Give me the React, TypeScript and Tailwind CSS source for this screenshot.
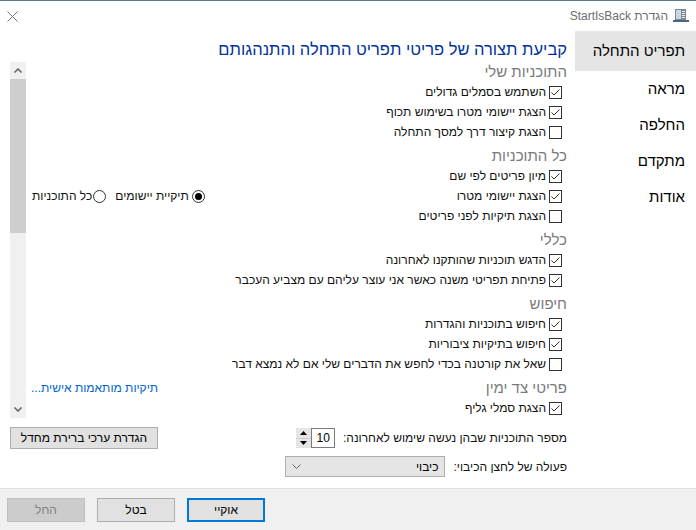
import type { ReactNode } from 'react';

const font = { fontFamily: '"Liberation Sans", Arial, "DejaVu Sans", sans-serif' };

function Check({ on }: { on: boolean }) {
  return (
    <svg width="13" height="13" viewBox="0 0 13 13" className="shrink-0">
      <rect x="0.5" y="0.5" width="12" height="12" fill="white" stroke="#333" />
      {on && <path d="M2.5 6.5 L5 9 L10.5 3.5" fill="none" stroke="#333" strokeWidth="1" />}
    </svg>
  );
}

function Radio({ on }: { on: boolean }) {
  return (
    <svg width="13" height="13" viewBox="0 0 13 13" className="shrink-0">
      <circle cx="6.5" cy="6.5" r="6" fill="white" stroke="#333" />
      {on && <circle cx="6.5" cy="6.5" r="3.5" fill="#000" />}
    </svg>
  );
}

function Item({ on, label, children }: { on: boolean; label: string; children?: ReactNode }) {
  return (
    <div className="flex h-[20px] items-center pr-[5px]">
      <Check on={on} />
      <span className="mr-[3px] whitespace-nowrap text-[12px] text-[#111]">{label}</span>
      {children}
    </div>
  );
}

function Section({ title, first, children }: { title: string; first?: boolean; children?: ReactNode }) {
  return (
    <div className={`flex h-[20px] items-center justify-between ${first ? '' : 'mt-[4px]'}`}>
      <span className="whitespace-nowrap text-[15px] text-[#7a7a7a]">{title}</span>
      {children}
    </div>
  );
}

const NAV = ['תפריט התחלה', 'מראה', 'החלפה', 'מתקדם', 'אודות'];

export default function App() {
  return (
    <div
      dir="rtl"
      style={font}
      className="flex h-[530px] w-[696px] flex-col overflow-hidden border-t border-[#5b7a91] bg-white"
    >
      {/* Title bar */}
      <div className="flex h-[30px] shrink-0 items-center pl-[7px] pr-[7px]">
        <svg width="16" height="14" viewBox="0 0 16 14" className="shrink-0">
          <rect x="2" y="0" width="11" height="11" fill="#7a8896" />
          <rect x="3" y="1" width="5" height="9" fill="#cfd6dc" />
          <rect x="9" y="2" width="3" height="1" fill="#e8ecef" />
          <rect x="9" y="4" width="3" height="1" fill="#e8ecef" />
          <rect x="9" y="6" width="3" height="1" fill="#e8ecef" />
          <rect x="9" y="8" width="3" height="1" fill="#e8ecef" />
          <rect x="0" y="11" width="16" height="2" fill="#4f6478" />
        </svg>
        <span className="mr-[5px] whitespace-nowrap text-[12px] text-[#6d6d6d]">הגדרת StartIsBack</span>
        <div className="flex-1" />
        <svg width="11" height="11" viewBox="0 0 11 11" className="shrink-0">
          <path d="M0.5 0.5 L10.5 10.5 M10.5 0.5 L0.5 10.5" stroke="#777" strokeWidth="1" />
        </svg>
      </div>

      {/* Body */}
      <div className="flex min-h-0 flex-1">
        {/* Navigation */}
        <div className="flex w-[121px] shrink-0 flex-col">
          {NAV.map((n, i) => (
            <div
              key={n}
              className={`flex items-center whitespace-nowrap pr-[11px] text-[15px] text-black ${
                i === 0 ? 'h-[40px] bg-[#e5e5e5]' : 'h-[36px]'
              }`}
            >
              {n}
            </div>
          ))}
        </div>

        {/* Main */}
        <div className="mr-[8px] flex min-w-0 flex-1 flex-col pl-[10px]">
          <div className="h-[31px] shrink-0 whitespace-nowrap pt-[8px] text-[16.5px] leading-[20px] text-[#003399]">
            קביעת תצורה של פריטי תפריט התחלה והתנהגותם
          </div>

          <div className="flex h-[356px] shrink-0">
            <div className="min-w-0 flex-1">
              <Section title="התוכניות שלי" first />
              <Item on label="השתמש בסמלים גדולים" />
              <Item on label="הצגת יישומי מטרו בשימוש תכוף" />
              <Item on={false} label="הצגת קיצור דרך למסך התחלה" />

              <Section title="כל התוכניות" />
              <Item on label="מיון פריטים לפי שם" />
              <Item on label="הצגת יישומי מטרו">
                <div className="ml-[6px] mr-auto flex items-center">
                  <Radio on />
                  <span className="mr-[3px] whitespace-nowrap text-[12px] text-[#111]">תיקיית יישומים</span>
                  <span className="mr-[9px]">
                    <Radio on={false} />
                  </span>
                  <span className="mr-[1px] whitespace-nowrap text-[12px] text-[#111]">כל התוכניות</span>
                </div>
              </Item>
              <Item on={false} label="הצגת תיקיות לפני פריטים" />

              <Section title="כללי" />
              <Item on label="הדגש תוכניות שהותקנו לאחרונה" />
              <Item on label="פתיחת תפריטי משנה כאשר אני עוצר עליהם עם מצביע העכבר" />

              <Section title="חיפוש" />
              <Item on label="חיפוש בתוכניות והגדרות" />
              <Item on label="חיפוש בתיקיות ציבוריות" />
              <Item on={false} label="שאל את קורטנה בכדי לחפש את הדברים שלי אם לא נמצא דבר" />

              <Section title="פריטי צד ימין">
                <span className="ml-[5px] whitespace-nowrap text-[12px] text-[#0066cc]">תיקיות מותאמות אישית...</span>
              </Section>
              <Item on label="הצגת סמלי גליף" />
            </div>

            {/* Scrollbar */}
            <div className="flex w-[16px] shrink-0 flex-col bg-[#f0f0f0]">
              <div className="flex h-[17px] items-center justify-center">
                <svg width="8" height="5" viewBox="0 0 8 5">
                  <path d="M0.5 4.5 L4 1 L7.5 4.5" fill="none" stroke="#606060" strokeWidth="1.5" />
                </svg>
              </div>
              <div className="h-[154px] bg-[#cdcdcd]" />
              <div className="flex-1" />
              <div className="flex h-[17px] items-center justify-center">
                <svg width="8" height="5" viewBox="0 0 8 5">
                  <path d="M0.5 0.5 L4 4 L7.5 0.5" fill="none" stroke="#606060" strokeWidth="1.5" />
                </svg>
              </div>
            </div>
          </div>

          {/* Recent count row */}
          <div className="mt-[9px] flex h-[22px] shrink-0 items-center justify-between">
            <div className="flex items-center">
              <span className="whitespace-nowrap text-[12px] text-[#111]">מספר התוכניות שבהן נעשה שימוש לאחרונה:</span>
              <div className="mr-[8px] flex h-[20px] items-stretch">
                <div className="flex w-[24px] items-center border border-[#7a7a7a] bg-white pr-[4px] text-[12px]">
                  10
                </div>
                <div className="flex w-[15px] flex-col bg-[#e5e5e5]">
                  <div className="flex flex-1 items-center justify-center border-b border-[#cfcfcf]">
                    <svg width="7" height="4" viewBox="0 0 7 4">
                      <path d="M0 4 L3.5 0 L7 4 Z" fill="#000" />
                    </svg>
                  </div>
                  <div className="flex flex-1 items-center justify-center">
                    <svg width="7" height="4" viewBox="0 0 7 4">
                      <path d="M0 0 L3.5 4 L7 0 Z" fill="#000" />
                    </svg>
                  </div>
                </div>
              </div>
            </div>
            <button className="flex h-[22px] w-[148px] items-center justify-center border border-[#adadad] bg-[#e1e1e1] text-[12px] text-black">
              הגדרת ערכי ברירת מחדל
            </button>
          </div>

          {/* Power button row */}
          <div className="mt-[7px] flex h-[21px] shrink-0 items-center">
            <span className="whitespace-nowrap text-[12px] text-[#111]">פעולה של לחצן הכיבוי:</span>
            <div className="mr-[9px] flex h-[21px] w-[160px] items-center justify-between border border-[#adadad] bg-[#e5e5e5] pl-[6px] pr-[5px] text-[12px]">
              <span>כיבוי</span>
              <svg width="9" height="5" viewBox="0 0 9 5">
                <path d="M0.5 0.5 L4.5 4.5 L8.5 0.5" fill="none" stroke="#606060" strokeWidth="1" />
              </svg>
            </div>
          </div>
        </div>
      </div>

      {/* Footer */}
      <div className="flex h-[42px] shrink-0 items-start justify-end gap-[12px] border-t border-[#dfdfdf] bg-[#f0f0f0] pl-[7px] pt-[9px]">
        <button className="flex h-[24px] w-[78px] items-center justify-center border-2 border-[#0078d7] bg-[#e1e1e1] text-[12px] text-black">
          אוקיי
        </button>
        <button className="flex h-[24px] w-[78px] items-center justify-center border border-[#adadad] bg-[#e1e1e1] text-[12px] text-black">
          בטל
        </button>
        <button className="flex h-[24px] w-[78px] items-center justify-center border border-[#bfbfbf] bg-[#cccccc] text-[12px] text-[#838383]">
          החל
        </button>
      </div>
    </div>
  );
}
